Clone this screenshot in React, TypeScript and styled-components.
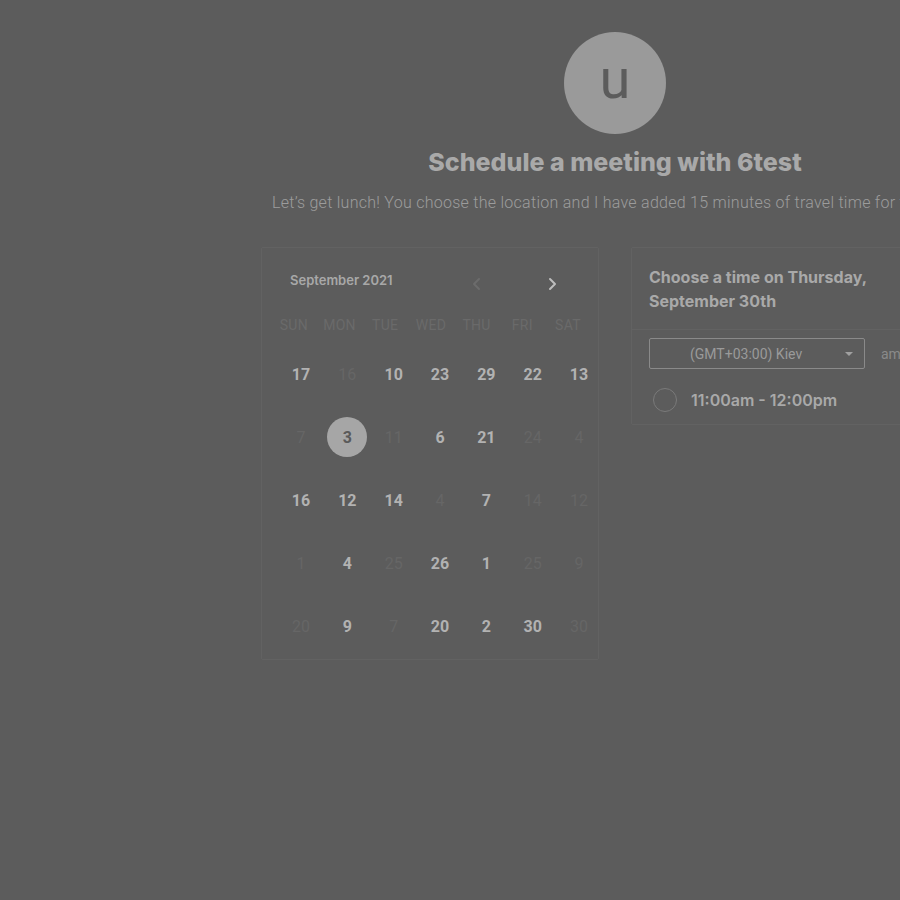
import React from "react";
import styled, { createGlobalStyle } from "styled-components";

const GlobalStyle = createGlobalStyle`
  html, body {
    margin: 0;
    padding: 0;
    overflow: hidden;
    background: #5c5c5c;
  }
  body {
    font-family: Roboto, "Liberation Sans", sans-serif;
  }
`;

const Page = styled.div`
  width: 1230px;
  height: 900px;
  display: flex;
  flex-direction: column;
  align-items: center;
  padding-top: 32px;
  box-sizing: border-box;
`;

const Avatar = styled.div`
  width: 102px;
  height: 102px;
  border-radius: 50%;
  background: #9a9a9a;
  color: #5c5c5c;
  font-family: Roboto, sans-serif;
  font-size: 56px;
  line-height: 94px;
  text-align: center;
`;

const Title = styled.h1`
  margin: 14px 0 0;
  font-family: Inter, sans-serif;
  font-weight: 800;
  font-size: 25px;
  line-height: 28px;
  color: #a9a9a9;
`;

const Subtitle = styled.p`
  margin: 15px 0 0;
  font-family: Roboto, sans-serif;
  font-weight: 300;
  font-size: 16px;
  letter-spacing: 0.27px;
  line-height: 24px;
  color: #9c9c9c;
  white-space: nowrap;
`;

const Panels = styled.div`
  display: flex;
  gap: 32px;
  margin-top: 32px;
  align-items: flex-start;
`;

const Card = styled.div`
  width: 338px;
  border: 1px solid #626262;
  border-radius: 2px;
  box-sizing: border-box;
`;

const Calendar = styled(Card)`
  height: 413px;
  padding: 20px 0 0 0;
`;

const CalHeader = styled.div`
  display: flex;
  align-items: center;
  padding: 0 0 0 28px;
  height: 24px;
`;

const Month = styled.div`
  font-family: Inter, sans-serif;
  font-weight: 600;
  font-size: 13px;
  color: #a8a8a8;
  flex: 1;
`;

const NavButton = styled.div<{ $active?: boolean }>`
  width: 24px;
  height: 24px;
  display: flex;
  align-items: center;
  justify-content: center;
  margin-top: 8px;
  color: ${(p) => (p.$active ? "#bdbdbd" : "#6c6c6c")};
`;

const NavGap = styled.div<{ $w: number }>`
  width: ${(p) => p.$w}px;
`;

const Weekdays = styled.div`
  display: grid;
  grid-template-columns: repeat(7, 45.7px);
  padding-left: 9px;
  margin-top: 25px;
`;

const Weekday = styled.div`
  font-family: Roboto, sans-serif;
  font-size: 14px;
  color: #6a6a6a;
  text-align: center;
  letter-spacing: 0.3px;
`;

const Days = styled.div`
  display: grid;
  grid-template-columns: repeat(7, 40px);
  column-gap: 6.33px;
  row-gap: 23px;
  padding-left: 19px;
  margin-top: 21px;
`;

const Day = styled.div<{ $state: "on" | "off" | "selected" }>`
  width: 40px;
  height: 40px;
  border-radius: 50%;
  display: flex;
  align-items: center;
  justify-content: center;
  font-family: Roboto, sans-serif;
  font-size: 16px;
  font-weight: ${(p) => (p.$state === "off" ? 400 : 700)};
  color: ${(p) =>
    p.$state === "off" ? "#666666" : p.$state === "selected" ? "#5a5a5a" : "#b2b2b2"};
  background: ${(p) => (p.$state === "selected" ? "#a6a6a6" : "transparent")};
`;

const TimeCard = styled(Card)`
  padding-bottom: 12px;
`;

const TimeHeader = styled.div`
  padding: 17px 17px 16px;
  border-bottom: 1px solid #626262;
  font-family: Inter, sans-serif;
  font-weight: 700;
  font-size: 16px;
  line-height: 24px;
  color: #a9a9a9;
`;

const ZoneRow = styled.div`
  display: flex;
  align-items: center;
  padding: 8px 17px 0;
  gap: 16px;
`;

const Select = styled.div`
  width: 216px;
  height: 31px;
  box-sizing: border-box;
  border: 1px solid #8a8a8a;
  border-radius: 2px;
  display: flex;
  align-items: center;
  position: relative;
  font-family: Roboto, sans-serif;
  font-size: 14px;
  color: #9a9a9a;
  padding-left: 40px;
`;

const Caret = styled.div`
  position: absolute;
  right: 11px;
  top: 13px;
  width: 0;
  height: 0;
  border-left: 4px solid transparent;
  border-right: 4px solid transparent;
  border-top: 4px solid #a0a0a0;
`;

const Format = styled.div`
  font-family: Roboto, sans-serif;
  font-size: 14px;
  color: #8a8a8a;
`;

const Slot = styled.div`
  display: flex;
  align-items: center;
  gap: 14px;
  padding: 19px 20px 0 21px;
`;

const Radio = styled.div`
  width: 22px;
  height: 22px;
  border: 1px solid #7a7a7a;
  border-radius: 50%;
`;

const SlotText = styled.div`
  font-family: Inter, sans-serif;
  font-weight: 600;
  font-size: 16px;
  color: #a9a9a9;
`;

type DayState = "on" | "off" | "selected";
const weekdays = ["Sun", "Mon", "Tue", "Wed", "Thu", "Fri", "Sat"];
const days: [string, DayState][] = [
  ["17", "on"], ["16", "off"], ["10", "on"], ["23", "on"], ["29", "on"], ["22", "on"], ["13", "on"],
  ["7", "off"], ["3", "selected"], ["11", "off"], ["6", "on"], ["21", "on"], ["24", "off"], ["4", "off"],
  ["16", "on"], ["12", "on"], ["14", "on"], ["4", "off"], ["7", "on"], ["14", "off"], ["12", "off"],
  ["1", "off"], ["4", "on"], ["25", "off"], ["26", "on"], ["1", "on"], ["25", "off"], ["9", "off"],
  ["20", "off"], ["9", "on"], ["7", "off"], ["20", "on"], ["2", "on"], ["30", "on"], ["30", "off"],
];

const Chevron: React.FC<{ dir: "left" | "right" }> = ({ dir }) => (
  <svg width="14" height="14" viewBox="0 0 14 14" fill="none">
    <path
      d={dir === "left" ? "M9 2 L4 7 L9 12" : "M5 2 L10 7 L5 12"}
      stroke="currentColor"
      strokeWidth="2"
      strokeLinecap="round"
      strokeLinejoin="round"
    />
  </svg>
);

const App: React.FC = () => {
  return (
    <>
      <GlobalStyle />
      <Page>
        <Avatar>u</Avatar>
        <Title>Schedule a meeting with 6test</Title>
        <Subtitle>
          Let’s get lunch! You choose the location and I have added 15 minutes of travel time for the ride.
        </Subtitle>
        <Panels>
          <Calendar>
            <CalHeader>
              <Month>September 2021</Month>
              <NavButton>
                <Chevron dir="left" />
              </NavButton>
              <NavGap $w={51} />
              <NavButton $active>
                <Chevron dir="right" />
              </NavButton>
              <NavGap $w={34} />
            </CalHeader>
            <Weekdays>
              {weekdays.map((w) => (
                <Weekday key={w}>{w.toUpperCase()}</Weekday>
              ))}
            </Weekdays>
            <Days>
              {days.map(([n, s], i) => (
                <Day key={i} $state={s}>
                  {n}
                </Day>
              ))}
            </Days>
          </Calendar>
          <TimeCard>
            <TimeHeader>
              Choose a time on Thursday,
              <br />
              September 30th
            </TimeHeader>
            <ZoneRow>
              <Select>
                (GMT+03:00) Kiev
                <Caret />
              </Select>
              <Format>am/pm</Format>
            </ZoneRow>
            <Slot>
              <Radio />
              <SlotText>11:00am - 12:00pm</SlotText>
            </Slot>
          </TimeCard>
        </Panels>
      </Page>
    </>
  );
};

export default App;
